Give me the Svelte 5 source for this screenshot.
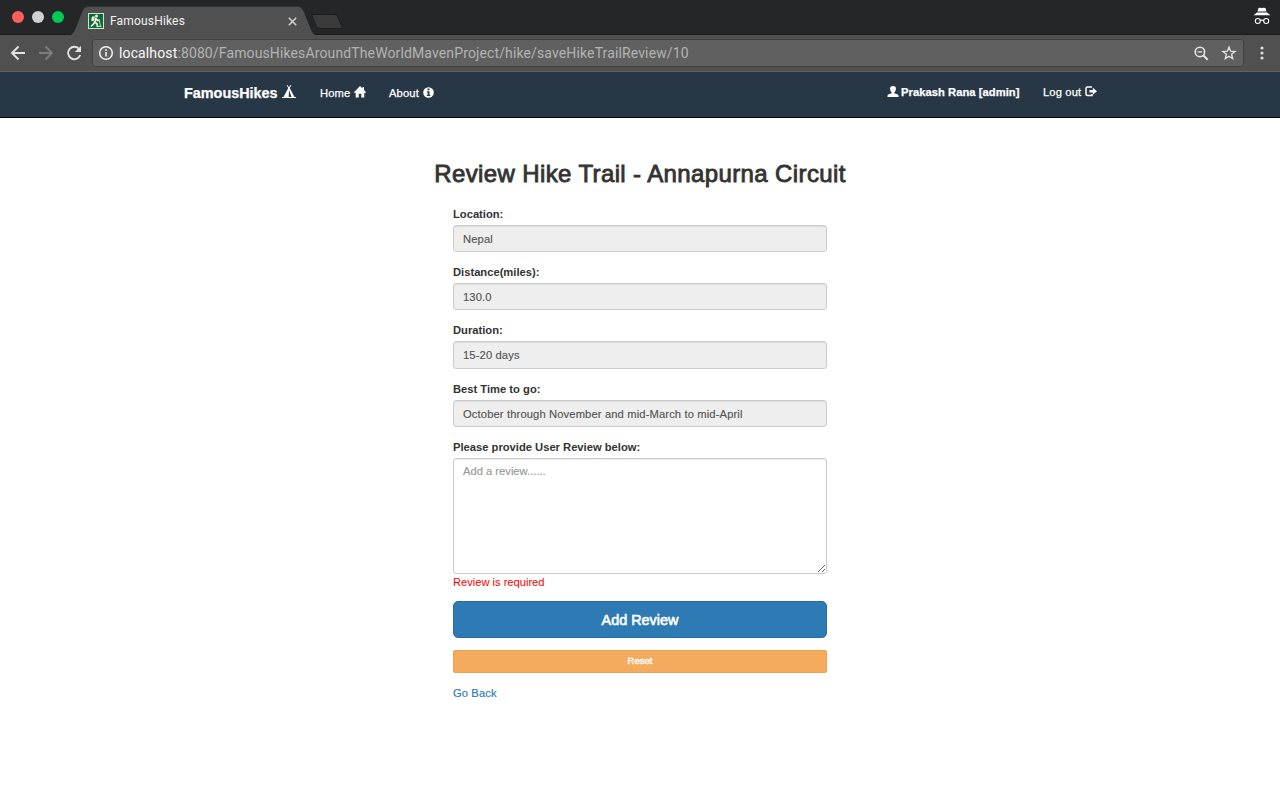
<script>
  const fields = [
    { label: 'Location:', value: 'Nepal', cls: 'f1' },
    { label: 'Distance(miles):', value: '130.0', cls: 'f2' },
    { label: 'Duration:', value: '15-20 days', cls: 'f3' },
    { label: 'Best Time to go:', value: 'October through November and mid-March to mid-April', cls: 'f4' }
  ];
</script>

<div class="window">
  <div class="tabstrip">
    <div class="lights"><i class="red"></i><i class="grey"></i><i class="green"></i></div>
    <div class="tab">
      <svg class="shape" width="244" height="29" viewBox="0 0 244 29">
        <path d="M0 29L1.5 27.5Q3 26 4 24L12 4Q13.500 1 16 1H228Q230.500 1 232 4L240 24Q241 27 244 29Z" fill="#505050" />
        <path d="M12 4Q13.500 .5 16 .5H228Q230.500 .5 232 4" fill="none" stroke="#333435" />
      </svg>
      <svg class="favicon" width="16" height="16" viewBox="0 0 16 16">
        <path d="M0 0H16V16H0Z" fill="#d5dfc8" />
        <path d="M1 1H15V15H1Z" fill="#0b6b3a" />
        <circle cx="8.500" cy="3" r="1.500" fill="#f5f2e0" />
        <path d="M4 3.500L7 3.500L5.800 8.500L3.200 7.500Z" fill="#f5f2e0" />
        <path d="M8 5L7 9L9 11L9.500 14M7 9L5.500 11L3 13.500M8 5.500L9.500 7.500H11.500" fill="none" stroke="#f5f2e0" stroke-width="1.700" />
        <path d="M11 6L12.500 13.500M9.500 13.500H13.500" fill="none" stroke="#d5dfc8" stroke-width=".9" />
      </svg>
      <span class="tabtitle">FamousHikes</span>
      <svg class="close" width="9" height="9" viewBox="0 0 9 9"><path d="M.8 .8L8.200 8.200M8.200 .8L.8 8.200" stroke="#d0d0d0" stroke-width="1.600" /></svg>
    </div>
    <svg class="newtab" width="34" height="17" viewBox="0 0 34 17"><path d="M3 1.500H24Q26.500 1.500 27.500 3.500L32 13.500Q32.500 15.500 30.500 15.500H10Q7.500 15.500 6.500 13.500L2 3Q1.500 1.500 3 1.500Z" fill="#3b3b3c" stroke="#1c1d1f" /></svg>
    <svg class="incognito" width="18" height="18" viewBox="0 0 18 18">
      <path d="M5.500 1Q7.200 .3 9 1Q10.800 .3 12.500 1L13.500 4.500H4.500ZM4 5.600H14L17.500 8.200H.5Z" fill="#fff" />
      <g fill="none" stroke="#fff" stroke-width="1.100"><circle cx="4.800" cy="14" r="2.500" /><circle cx="13.200" cy="14" r="2.500" /><path d="M7.200 13.600Q9 12.600 10.800 13.600" /></g>
    </svg>
  </div>

  <div class="toolbar">
    <svg class="back" width="16" height="16" viewBox="0 0 16 16"><path d="M15 8H2.500M8.500 1.500L2 8L8.500 14.500" fill="none" stroke="#e3e3e3" stroke-width="1.900" /></svg>
    <svg class="forward" width="16" height="16" viewBox="0 0 16 16"><path d="M1 8H13.500M7.500 1.500L14 8L7.500 14.500" fill="none" stroke="#7d7d7d" stroke-width="1.900" /></svg>
    <svg class="reload" width="16" height="16" viewBox="0 0 16 16"><path d="M13.300 4.300A6.200 6.200 0 1 0 14.200 10" fill="none" stroke="#e3e3e3" stroke-width="1.900" /><path d="M15 .8V7H8.800Z" fill="#e3e3e3" /></svg>
    <div class="omnibox">
      <svg class="info" width="16" height="16" viewBox="0 0 16 16"><circle cx="8" cy="8" r="6.300" fill="none" stroke="#f2f2f2" stroke-width="1.500" /><path d="M7.200 4.300H8.800V5.900H7.200ZM7.200 7H8.800V11.600H7.200Z" fill="#f2f2f2" /></svg>
      <span class="url"><span class="host">localhost</span><span class="rest">:8080/FamousHikesAroundTheWorldMavenProject/hike/saveHikeTrailReview/10</span></span>
      <svg class="zoom" width="15" height="15" viewBox="0 0 15 15"><g fill="none" stroke="#e6e6e6"><circle cx="5.900" cy="5.900" r="4.700" stroke-width="1.600" /><path d="M9.200 9.200L13.700 13.700" stroke-width="2" /><path d="M3.500 5.900H8.300" stroke-width="1.200" /></g></svg>
      <svg class="star" width="16" height="16" viewBox="0 0 16 16"><path d="M8 2.200L9.600 6.200L14 6.500L10.600 9.300L11.700 13.600L8 11.300L4.300 13.600L5.400 9.300L2 6.500L6.400 6.200Z" fill="none" stroke="#e0e0e0" stroke-width="1.400" /></svg>
    </div>
    <svg class="more" width="4" height="14" viewBox="0 0 4 14"><g fill="#dedede"><circle cx="2" cy="2" r="1.600" /><circle cx="2" cy="7" r="1.600" /><circle cx="2" cy="12" r="1.600" /></g></svg>
  </div>

  <nav>
    <span class="brand">FamousHikes</span>
    <svg class="tent" width="14" height="14" viewBox="0 0 14 14"><path fill="#fff" fill-rule="evenodd" d="M4.700 .4L5.500 0L7 2.200L8.500 0L9.300 .4L7.700 3L12.500 12H14V13H0V12H1.500L6.300 3ZM7 5L6.700 12H9.500Z" /></svg>
    <span class="home">Home</span>
    <svg class="house" width="12" height="12" viewBox="0 0 12 12"><path fill="#fff" d="M6 0L8.500 2.500V1H10V4L12 6.200V6.800H10.300V11.500H7.300V7.700H4.700V11.500H1.700V6.800H0V6.200Z" /></svg>
    <span class="about">About</span>
    <svg class="badge" width="11" height="11" viewBox="0 0 11 11"><circle cx="5.500" cy="5.500" r="5.300" fill="#fff" /><path d="M4.500 1.500H6.500V3.200H4.500ZM3.800 4.300H6.500V7.900H7.300V9H3.800V7.900H4.600V5.300H3.800Z" fill="#273746" /></svg>
    <svg class="person" width="12" height="11" viewBox="0 0 12 11"><path d="M3 2.600Q3 0 6 0Q9 0 9 2.600Q9 4.800 7.400 6.200V7.200L10.700 8.600Q11.500 9 11.500 10V10.900H.5V10Q.5 9 1.300 8.600L4.600 7.200V6.200Q3 4.800 3 2.600Z" fill="#fff" /></svg>
    <span class="user">Prakash Rana [admin]</span>
    <span class="logout">Log out</span>
    <svg class="exit" width="12" height="11" viewBox="0 0 12 11"><path d="M7 1H2.500Q1 1 1 2.500V8Q1 9.500 2.500 9.500H7V8" fill="none" stroke="#fff" stroke-width="1.500" /><path d="M4.500 4H7.800V1.800L12 5.300L7.800 8.700V6.600H4.500Z" fill="#fff" /></svg>
  </nav>

  <main>
    <h2><span>Review Hike Trail - Annapurna Circuit</span></h2>
    <form>
      {#each fields as f}
        <div class="group {f.cls}">
          <label for={f.cls}><span>{f.label}</span></label>
          <div class="control" id={f.cls}><span>{f.value}</span></div>
        </div>
      {/each}
      <div class="review">
        <label for="review"><span class="rl">Please provide User Review below:</span></label>
        <div class="area" id="review">
          <span class="ph">Add a review......</span>
          <svg class="grip" width="9" height="9" viewBox="0 0 9 9"><path d="M1 8L8 1M5 8L8 5" stroke="#555" stroke-width=".9" /></svg>
        </div>
      </div>
      <div class="error"><span>Review is required</span></div>
      <button type="button" class="add"><span>Add Review</span></button>
      <button type="button" class="reset"><span>Reset</span></button>
      <div class="goback"><span>Go Back</span></div>
    </form>
  </main>
</div>

<style>
  :global(body) { margin: 0; background: #fff; }
  .window { width: 1280px; height: 798px; overflow: hidden; display: flex; flex-direction: column; font: 11.2px/16px "Liberation Sans", Arial, sans-serif; color: #333; }
  .window * { box-sizing: border-box; }
  span { white-space: nowrap; }
  svg { display: block; flex: none; }

  .tabstrip { height: 35px; background: #242628; border-bottom: 1px solid #1b1c1d; display: flex; flex: none; align-items: flex-start; }
  .lights { display: flex; gap: 8px; padding: 11px 0 0 12px; width: 71px; flex: none; }
  .lights i { width: 12px; height: 12px; border-radius: 50%; }
  .red { background: #ff5f5a; }
  .grey { background: #d0d0d0; }
  .green { background: #00ca56; }
  .tab { position: relative; width: 244px; height: 29px; margin-top: 6px; display: flex; align-items: center; padding-left: 17px; flex: none; }
  .shape { position: absolute; left: 0; top: 0; }
  .favicon, .tabtitle, .close { position: relative; }
  .favicon { margin-top: 1px; }
  .tabtitle { width: 179px; margin-left: 6px; font: 12px/16px Roboto, sans-serif; letter-spacing: .17px; color: #f2f2f2; }
  .close { margin: 1px 0 0 -1px; }
  .newtab { margin: 13px 0 0 -5px; }
  .incognito { margin: 7px 9px 0 auto; }

  .toolbar { height: 37px; flex: none; background: #505050; border-bottom: 1px solid #626262; display: flex; align-items: center; padding-left: 10px; }
  .forward { margin-left: 12px; }
  .reload { margin-left: 12px; }
  .omnibox { width: 1152px; height: 28px; margin-left: 10px; border: 1px solid #404040; border-radius: 3px; background: #606060; display: flex; align-items: center; padding: 0 6px 0 5px; }
  .url { margin-left: 5px; font: 14px/20px Roboto, sans-serif; color: #b3b3b3; letter-spacing: .125px; }
  .host { color: #fafafa; }
  .zoom { margin-left: auto; }
  .star { margin-left: 12px; }
  .more { margin-left: 16px; }

  nav { height: 46px; flex: none; background: #273746; border-bottom: 1px solid #080808; display: flex; padding: 13px 0 0 184px; color: #fff; line-height: 16px; }
  nav span { -webkit-text-stroke: .25px #fff; }
  .brand { width: 98px; font-size: 14.4px; font-weight: 700; }
  .tent { width: 14px; }
  .home { width: 34px; margin-left: 24px; letter-spacing: .15px; }
  .house { margin-top: 1px; }
  .about { width: 34px; margin-left: 23px; letter-spacing: .15px; }
  .badge { margin-top: 2px; }
  .person { margin: 1px 0 0 453px; }
  .user { font-weight: 700; width: 120px; margin: -1px 0 0 2px; letter-spacing: .05px; }
  .logout { width: 42px; margin: -1px 0 0 22px; letter-spacing: .15px; }
  .exit { margin-top: 1px; }

  main { padding-top: 43px; }
  h2 { margin: 0; text-align: center; font-size: 24px; line-height: 26px; font-weight: 400; -webkit-text-stroke: .85px #333; letter-spacing: .38px; }
  form { width: 374px; margin: 18px 0 0 453px; }
  .group { height: 58.2px; }
  label { display: block; height: 20px; padding-top: 1px; font-weight: 700; }
  .control { height: 27.2px; padding: 5px 9px; background: #eee; border: 1px solid #ccc; border-radius: 3px; box-shadow: inset 0 1px 1px rgba(0, 0, 0, .075); color: #555; letter-spacing: .13px; -webkit-text-stroke: .15px #555; }
  .area { position: relative; height: 116.2px; padding: 4px 9px; border: 1px solid #ccc; border-radius: 3px; box-shadow: inset 0 1px 1px rgba(0, 0, 0, .075); color: #999; -webkit-text-stroke: .15px #999; }
  .grip { position: absolute; right: 0; bottom: 0; }
  .error { height: 27px; color: #f00; letter-spacing: -.03px; }
  button { display: block; width: 374px; padding: 0; color: #fff; font-family: inherit; text-align: center; }
  .add { height: 37px; background: #2e7ab4; border: 1px solid #286da4; border-radius: 5px; font-size: 14.4px; line-height: 35px; -webkit-text-stroke: .6px #fff; }
  .add span { display: block; padding-top: 1px; }
  .reset { height: 23px; margin-top: 12px; background: #f4ab5e; border: 1px solid #f1a04b; border-radius: 2px; font-size: 9.6px; line-height: 20px; -webkit-text-stroke: .4px #fff; }
  .goback { margin-top: 12px; color: #2e7ab4; letter-spacing: .1px; -webkit-text-stroke: .15px #2e7ab4; }
</style>
